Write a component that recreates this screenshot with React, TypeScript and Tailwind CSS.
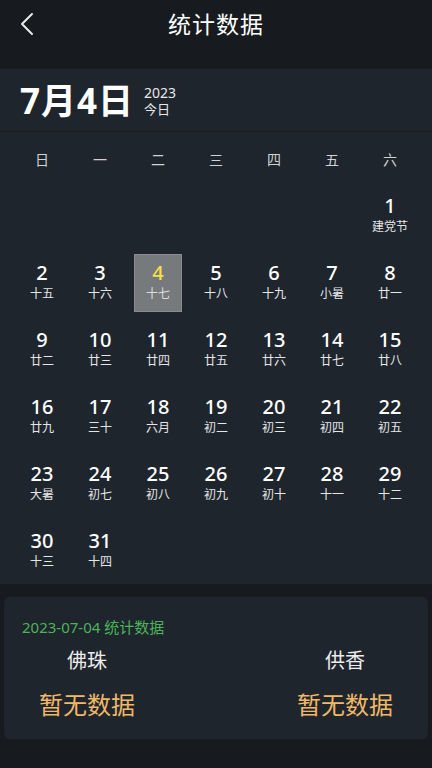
const lunar: Record<number, string> = {
  1: "建党节", 2: "十五", 3: "十六", 4: "十七", 5: "十八", 6: "十九", 7: "小暑", 8: "廿一",
  9: "廿二", 10: "廿三", 11: "廿四", 12: "廿五", 13: "廿六", 14: "廿七", 15: "廿八",
  16: "廿九", 17: "三十", 18: "六月", 19: "初二", 20: "初三", 21: "初四", 22: "初五",
  23: "大暑", 24: "初七", 25: "初八", 26: "初九", 27: "初十", 28: "十一", 29: "十二",
  30: "十三", 31: "十四",
};

const weekdays = ["日", "一", "二", "三", "四", "五", "六"];

// July 2023 starts on Saturday
const cells: (number | null)[] = [...Array(6).fill(null), ...Array.from({ length: 31 }, (_, i) => i + 1)];
while (cells.length < 42) cells.push(null);

function DayCell({ day }: { day: number | null }) {
  if (!day) return <div className="h-[67px]" />;
  const today = day === 4;
  return (
    <div className="h-[67px] flex items-center justify-center">
      <div
        className={
          "w-[48px] h-[58px] flex flex-col items-center justify-center " +
          (today ? "bg-[#777a7d] border border-[#8a8d90]" : "")
        }
      >
        <span
          className={
            "text-[20px] leading-[22px] font-medium " + (today ? "text-[#f5e04a]" : "text-white")
          }
        >
          {day}
        </span>
        <span className={"text-[12px] leading-[18px] mt-[1px] " + (today ? "text-[#dcdcdc]" : "text-[#e6e6e6]")}>
          {lunar[day]}
        </span>
      </div>
    </div>
  );
}

export default function App() {
  return (
    <div
      className="w-[432px] h-[768px] bg-[#171b1f] flex flex-col overflow-hidden"
      style={{ fontFamily: '"Noto Sans", "Noto Sans CJK SC", sans-serif' }}
    >
      <header className="h-[69px] shrink-0">
        <div className="h-[48px] relative flex items-center justify-center">
          <svg className="absolute left-[17px] top-[10px]" width="20" height="28" viewBox="0 0 20 28" fill="none">
            <path d="M15 4 L5 14 L15 24" stroke="#e8e8e8" strokeWidth="2" strokeLinecap="round" strokeLinejoin="round" />
          </svg>
          <h1 className="text-[23px] text-white tracking-[1px] leading-none">统计数据</h1>
        </div>
      </header>

      <section className="bg-[#1f252d] shrink-0">
        <div className="h-[63px] flex items-center px-[20px] border-b border-[#181c21]">
          <span className="text-[35px] font-bold text-white leading-none tracking-[1px]">7月4日</span>
          <div className="ml-[10px] flex flex-col text-[#e8e8e8] mt-[2px]">
            <span className="text-[14px] leading-[16px] h-[16px]">2023</span>
            <span className="text-[13px] leading-[16px] h-[16px]">今日</span>
          </div>
        </div>
        <div className="px-[13px]">
          <div className="grid grid-cols-7 h-[50px] items-center text-center text-[14px] text-[#d0d2d4] pt-[4px]">
            {weekdays.map((w) => (
              <span key={w}>{w}</span>
            ))}
          </div>
          <div className="grid grid-cols-7">
            {cells.map((d, i) => (
              <DayCell key={i} day={d} />
            ))}
          </div>
        </div>
      </section>

      <div className="px-[4px] pt-[13px]">
        <div className="bg-[#1f252d] rounded-[6px] h-[142px] px-[18px] pt-[20px]">
          <div className="text-[15px] text-[#4cb35a] leading-[20px]">2023-07-04 统计数据</div>
          <div className="flex justify-between px-[16px] mt-[9px]">
            <div className="flex flex-col items-center w-[98px]">
              <span className="text-[20px] text-[#eeeeee] leading-[30px]">佛珠</span>
              <span className="text-[24px] text-[#f0b868] leading-[34px] mt-[12px]">暂无数据</span>
            </div>
            <div className="flex flex-col items-center w-[98px]">
              <span className="text-[20px] text-[#eeeeee] leading-[30px]">供香</span>
              <span className="text-[24px] text-[#f0b868] leading-[34px] mt-[12px]">暂无数据</span>
            </div>
          </div>
        </div>
      </div>
    </div>
  );
}
